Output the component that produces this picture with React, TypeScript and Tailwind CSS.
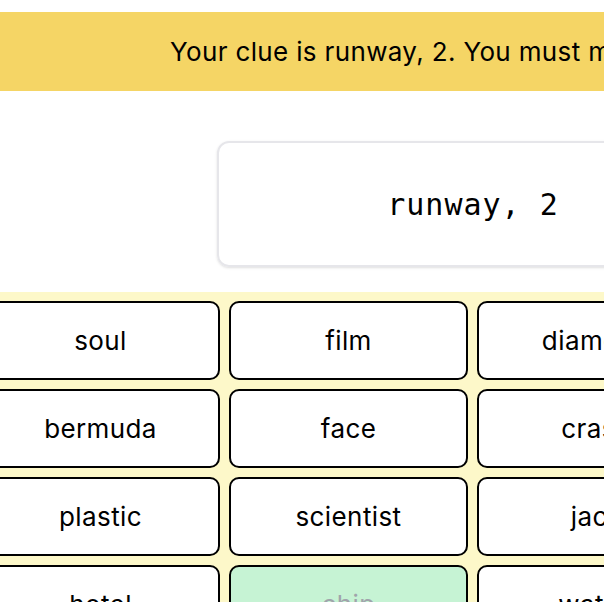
const rows = [
  ['soul', 'film', 'diamond', 'tower'],
  ['bermuda', 'face', 'crash', 'spring'],
  ['plastic', 'scientist', 'jack', 'mouse'],
  ['hotel', 'chip', 'watch', 'bank'],
];

export default function App() {
  return (
    <div className="w-[604px] h-[602px] overflow-hidden bg-white font-['Inter','Liberation_Sans',sans-serif] text-black">
      <div className="w-[1100px]">
        <div className="mt-3 h-[79px] bg-[#f5d565] flex items-center pl-[170px] text-[26px] tracking-[0.35px] whitespace-nowrap">
          Your clue is runway, 2. You must make 2 guesses.
        </div>
        <div className="mt-[50px] ml-[217px] w-[512px] h-[126px] rounded-xl border-2 border-[#e6e6ea] shadow-sm flex items-center justify-center font-['DejaVu_Sans_Mono',monospace] text-[30px] tracking-[1px]">
          runway, 2
        </div>
        <div className="mt-[25px] bg-[#fdf8c9] pt-[9px] pb-[9px]">
          <div className="ml-[-19px] grid grid-cols-[repeat(4,239px)] gap-[9px]">
            {rows.flat().map((w) => (
              <div
                key={w}
                className={
                  w === 'chip'
                    ? 'h-[79px] rounded-[10px] border-2 border-black bg-[#c6f3d4] text-[#a0a4ab] flex items-center justify-center text-[26px] tracking-[0.4px]'
                    : 'h-[79px] rounded-[10px] border-2 border-black bg-white flex items-center justify-center text-[26px] tracking-[0.4px]'
                }
              >
                {w}
              </div>
            ))}
          </div>
        </div>
      </div>
    </div>
  );
}
